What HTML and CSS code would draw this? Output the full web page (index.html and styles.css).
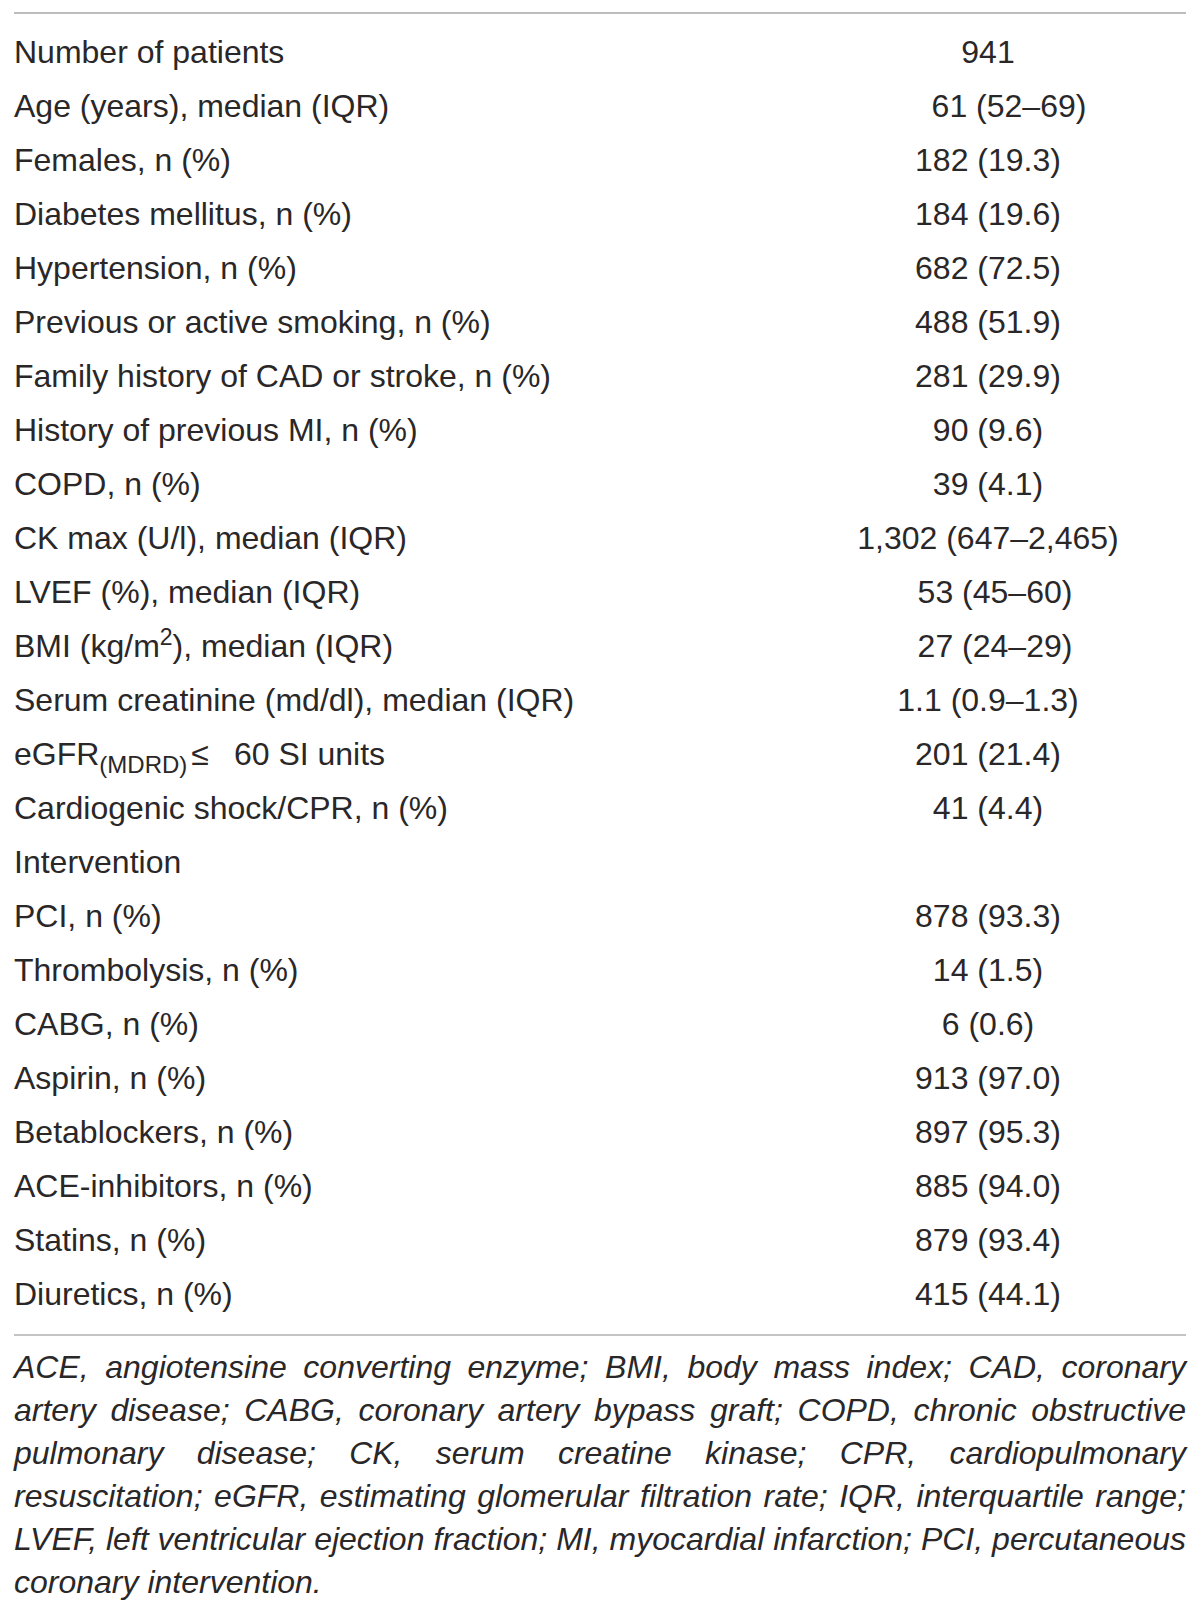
FILE: index.html
```html
<!DOCTYPE html>
<html lang="en">
<head>
<meta charset="utf-8">
<title>Baseline characteristics</title>
<link rel="stylesheet" href="styles.css">
</head>
<body>
<div class="sheet">
  <table class="data">
    <tbody>
      <tr><td class="lbl">Number of patients</td><td class="val">941</td></tr>
      <tr><td class="lbl">Age (years), median (IQR)</td><td class="val shift">61 (52–69)</td></tr>
      <tr><td class="lbl">Females, n (%)</td><td class="val">182 (19.3)</td></tr>
      <tr><td class="lbl">Diabetes mellitus, n (%)</td><td class="val">184 (19.6)</td></tr>
      <tr><td class="lbl">Hypertension, n (%)</td><td class="val">682 (72.5)</td></tr>
      <tr><td class="lbl">Previous or active smoking, n (%)</td><td class="val">488 (51.9)</td></tr>
      <tr><td class="lbl">Family history of CAD or stroke, n (%)</td><td class="val">281 (29.9)</td></tr>
      <tr><td class="lbl">History of previous MI, n (%)</td><td class="val">90 (9.6)</td></tr>
      <tr><td class="lbl">COPD, n (%)</td><td class="val">39 (4.1)</td></tr>
      <tr><td class="lbl">CK max (U/l), median (IQR)</td><td class="val">1,302 (647–2,465)</td></tr>
      <tr><td class="lbl">LVEF (%), median (IQR)</td><td class="val nudge">53 (45–60)</td></tr>
      <tr><td class="lbl">BMI (kg/m<sup>2</sup>), median (IQR)</td><td class="val nudge">27 (24–29)</td></tr>
      <tr><td class="lbl">Serum creatinine (md/dl), median (IQR)</td><td class="val">1.1 (0.9–1.3)</td></tr>
      <tr><td class="lbl">eGFR<sub>(MDRD)</sub><span class="le">≤</span>60 SI units</td><td class="val">201 (21.4)</td></tr>
      <tr><td class="lbl">Cardiogenic shock/CPR, n (%)</td><td class="val">41 (4.4)</td></tr>
      <tr><td class="lbl">Intervention</td><td class="val"></td></tr>
      <tr><td class="lbl">PCI, n (%)</td><td class="val">878 (93.3)</td></tr>
      <tr><td class="lbl">Thrombolysis, n (%)</td><td class="val">14 (1.5)</td></tr>
      <tr><td class="lbl">CABG, n (%)</td><td class="val">6 (0.6)</td></tr>
      <tr><td class="lbl">Aspirin, n (%)</td><td class="val">913 (97.0)</td></tr>
      <tr><td class="lbl">Betablockers, n (%)</td><td class="val">897 (95.3)</td></tr>
      <tr><td class="lbl">ACE-inhibitors, n (%)</td><td class="val">885 (94.0)</td></tr>
      <tr><td class="lbl">Statins, n (%)</td><td class="val">879 (93.4)</td></tr>
      <tr><td class="lbl">Diuretics, n (%)</td><td class="val">415 (44.1)</td></tr>
    </tbody>
  </table>
  <div class="note">
    <span class="ln">ACE, angiotensine converting enzyme; BMI, body mass index; CAD, coronary</span>
    <span class="ln">artery disease; CABG, coronary artery bypass graft; COPD, chronic obstructive</span>
    <span class="ln">pulmonary disease; CK, serum creatine kinase; CPR, cardiopulmonary</span>
    <span class="ln">resuscitation; eGFR, estimating glomerular filtration rate; IQR, interquartile range;</span>
    <span class="ln">LVEF, left ventricular ejection fraction; MI, myocardial infarction; PCI, percutaneous</span>
    <span class="ln last">coronary intervention.</span>
  </div>
</div>
</body>
</html>
```
FILE: styles.css
```css
html, body {
  margin: 0;
  padding: 0;
  background: #ffffff;
}

body {
  font-family: "Liberation Sans", Arial, Helvetica, sans-serif;
  color: #2a2728;
}

.sheet {
  width: 1172px;
  margin-left: 14px;
  padding-top: 12px;
}

.data {
  width: 100%;
  border-collapse: collapse;
  border-top: 2px solid #bdbdbd;
  border-bottom: 2px solid #c4c4c4;
}

.data tbody tr:first-child td {
  padding-top: 11px;
}

.data tbody tr:last-child td {
  padding-bottom: 13px;
}

.data td {
  box-sizing: border-box;
  padding: 0;
  height: 54px;
  line-height: 54px;
  font-size: 32px;
  white-space: nowrap;
  vertical-align: top;
}

.lbl {
  text-align: left;
}

.val {
  width: 396px;
  text-align: center;
}

.val.shift {
  padding-left: 42px;
}

.val.nudge {
  padding-left: 14px;
}

.data sup {
  font-size: 23px;
  line-height: 0;
  vertical-align: 12px;
}

.data sub {
  font-size: 24px;
  line-height: 0;
  vertical-align: -8px;
}

.le {
  margin: 0 25px 0 4px;
}

.note {
  padding-top: 10px;
  font-size: 32px;
  line-height: 43px;
  font-style: italic;
}

.ln {
  display: block;
  text-align: justify;
  text-align-last: justify;
  white-space: nowrap;
}

.ln.last {
  text-align: left;
  text-align-last: left;
}
```
